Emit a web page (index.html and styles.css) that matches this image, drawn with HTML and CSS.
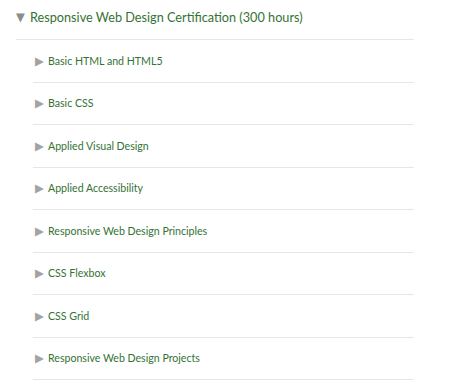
FILE: index.html
```html
<!DOCTYPE html>
<html lang="en">
<head>
    <meta charset="UTF-8">
    <title>Curriculum</title>
    <link rel="stylesheet" href="styles.css">
</head>
<body>
    <div class="cert">
        <div class="cert-title"><span class="arrow">&#9660;</span>Responsive Web Design Certification (300 hours)</div>
        <ul class="blocks">
            <li><span class="arrow">&#9654;</span>Basic HTML and HTML5</li>
            <li><span class="arrow">&#9654;</span>Basic CSS</li>
            <li><span class="arrow">&#9654;</span>Applied Visual Design</li>
            <li><span class="arrow">&#9654;</span>Applied Accessibility</li>
            <li><span class="arrow">&#9654;</span>Responsive Web Design Principles</li>
            <li><span class="arrow">&#9654;</span>CSS Flexbox</li>
            <li><span class="arrow">&#9654;</span>CSS Grid</li>
            <li><span class="arrow">&#9654;</span>Responsive Web Design Projects</li>
        </ul>
    </div>
</body>
</html>
```
FILE: styles.css
```css
body {
    font-family: Lato, "Liberation Sans", sans-serif;
    background-color: #fff;
    margin: 0;
    padding: 0;
}
.cert {
    margin-left: 16px;
    width: 398px;
}
.cert-title {
    display: flex;
    align-items: center;
    height: 34px;
    padding-bottom: 5px;
    border-bottom: 1px solid #e6e6e6;
    color: #347234;
    font-size: 12.7px;
}
.arrow {
    font-family: "DejaVu Sans", sans-serif;
    flex: none;
}
.cert-title .arrow {
    color: #8c8c8c;
    font-size: 11.5px;
    width: 14px;
}
.blocks {
    list-style: none;
    margin: 0 0 0 17px;
    padding: 0;
}
.blocks li {
    display: flex;
    align-items: center;
    height: 41.5px;
    padding-left: 2px;
    border-bottom: 1px solid #e6e6e6;
    color: #347234;
    font-size: 10.6px;
}
.blocks .arrow {
    color: #a3a3a3;
    font-size: 11.5px;
    width: 13px;
}
```
